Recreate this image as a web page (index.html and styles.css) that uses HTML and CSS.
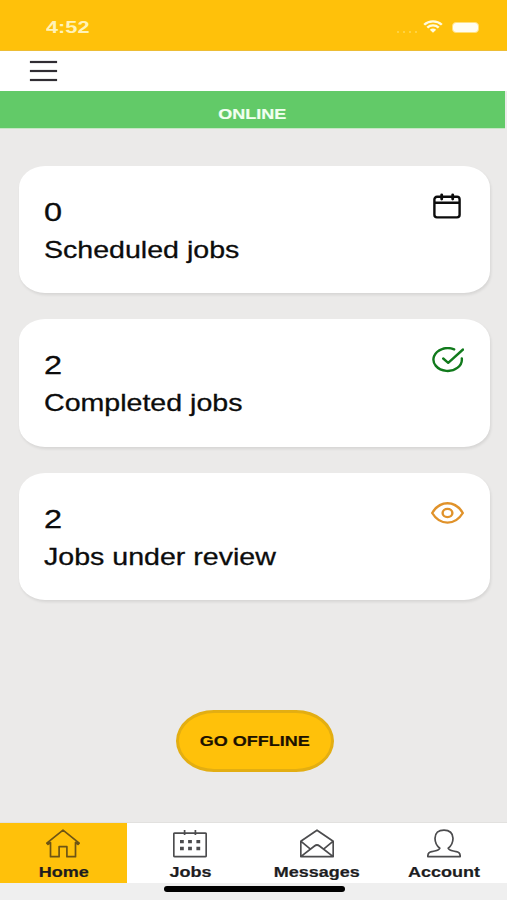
FILE: index.html
```html
<!DOCTYPE html>
<html lang="en">

<head>
    <meta charset="UTF-8">
    <meta name="viewport" content="width=device-width, initial-scale=1.0">
    <title>Jobs</title>
    <link rel="stylesheet" href="styles.css">
</head>

<body>
    <div class="status-bar">
        <span class="time">4:52</span>
        <div class="status-icons">
            <span class="dots"><i></i><i></i><i></i><i></i></span>
            <svg class="wifi" viewBox="0 0 20 14" preserveAspectRatio="none">
                <path d="M1.2 5.2a12.5 12.5 0 0 1 17.6 0M4.3 8.2a8.2 8.2 0 0 1 11.4 0" />
                <path class="fill" d="M6.8 10.6a4.6 4.6 0 0 1 6.4 0L10 13.8z" />
            </svg>
            <span class="battery"></span>
        </div>
    </div>

    <header>
        <button class="menu-btn" aria-label="Menu"><span></span><span></span><span></span></button>
    </header>

    <div class="banner"><span class="wide">ONLINE</span></div>

    <main>
        <div class="card">
            <div>
                <p class="count">0</p>
                <p class="label">Scheduled jobs</p>
            </div>
            <svg class="icon calendar" viewBox="0 0 28 26">
                <path d="M4 3.8h20a2.6 2.6 0 0 1 2.6 2.6v15.4a2.6 2.6 0 0 1-2.6 2.6H4a2.6 2.6 0 0 1-2.6-2.6V6.4A2.6 2.6 0 0 1 4 3.8zM1.4 9.8h25.2" />
                <path class="rings" d="M8.7 1.8v4.3M19.7 1.8v4.3" />
            </svg>
        </div>
        <div class="card">
            <div>
                <p class="count">2</p>
                <p class="label">Completed jobs</p>
            </div>
            <svg class="icon check" viewBox="0 0 32 26">
                <path d="M22.2 2.4A14.2 11.4 0 1 0 29.8 11.5M11.2 11.5l5 4.3L31 2.5" />
            </svg>
        </div>
        <div class="card">
            <div>
                <p class="count">2</p>
                <p class="label">Jobs under review</p>
            </div>
            <svg class="icon eye" viewBox="0 0 33 22">
                <path d="M1.2 11C5 4.5 10.5 1.2 16.5 1.2S28 4.5 31.8 11C28 17.3 22.5 20.6 16.5 20.6S5 17.3 1.2 11z" />
                <ellipse cx="16.5" cy="11" rx="4.9" ry="4.1" />
            </svg>
        </div>
        <button class="offline-btn"><span class="wide">GO OFFLINE</span></button>
    </main>

    <nav>
        <a href="#" class="active">
            <svg viewBox="0 0 34 30">
                <path d="M.8 14.2L17 1.2l16.2 13-1.2 1.1-2.5-1.8v14.2h-8.6v-10h-7.8v10H4.5V13.5L2 15.3z" />
            </svg>
            <span class="wide">Home</span>
        </a>
        <a href="#">
            <svg viewBox="0 0 34 30">
                <rect x=".8" y="4.1" width="32.4" height="23.6" rx="1" />
                <path d="M11.6 1v5M22.4 1v5" />
                <path class="days" d="M7 12.6h3.8M15.1 12.6h3.8M23.4 12.6h3.8M7 19.5h3.8M15.1 19.5h3.8M23.4 19.5h3.8" />
            </svg>
            <span class="wide">Jobs</span>
        </a>
        <a href="#">
            <svg viewBox="0 0 34 30">
                <path d="M.8 12.2L17 1.2l16.2 11v15.5H.8zM.8 12.2l9.900 8.1M33.2 12.2l-9.9 8.1M.8 27.7L14.5 17q2.5-2 5 0l13.700 10.7" />
            </svg>
            <span class="wide">Messages</span>
        </a>
        <a href="#">
            <svg viewBox="0 0 34 30">
                <path d="M17 1.1c-5.5 0-9 3-9 8.2 0 4.3 1.8 7.7 4.8 9.9-.8 2.2-3.3 2.3-7 3.2-3.7.8-5 1.4-5 5.3h32.4c0-3.9-1.3-4.5-5-5.3-3.7-.9-6.2-1-7-3.2 3-2.2 4.8-5.6 4.8-9.9 0-5.2-3.5-8.2-9-8.2z" />
            </svg>
            <span class="wide">Account</span>
        </a>
    </nav>

    <div class="home-area"><span class="home-bar"></span></div>
</body>

</html>
```
FILE: styles.css
```css
* {
    box-sizing: border-box;
}

body {
    margin: 0;
    height: 900px;
    display: flex;
    flex-direction: column;
    overflow: hidden;
    background-color: #ebeae9;
    color: #0c0c0c;
    font-family: "Liberation Sans", Arial, sans-serif;
}

button {
    border: none;
    padding: 0;
    background: none;
    font-family: inherit;
    color: inherit;
}

svg {
    display: block;
    fill: none;
    stroke: currentColor;
}

.wide {
    display: inline-block;
    transform: scaleX(1.2);
    -webkit-text-stroke: 0.2px;
}

.status-bar {
    height: 51px;
    padding: 4px 28px 0 46px;
    display: flex;
    justify-content: space-between;
    align-items: center;
    background-color: #ffc10a;
    border-bottom: 1px solid #edbd35;
}

.time {
    margin-top: 1px;
    color: #fff3b8;
    font-size: 17px;
    font-weight: bold;
    transform: scaleX(1.28);
    transform-origin: left;
}

.status-icons {
    display: flex;
    align-items: center;
}

.dots {
    display: flex;
    gap: 4px;
    margin: 9px 6px 0 0;
}

.dots i {
    width: 2px;
    height: 2px;
    border-radius: 50%;
    background-color: #ffd754;
}

.wifi {
    width: 20px;
    height: 13px;
    margin: -1px 9px 0 0;
    color: #fffbe0;
    stroke-width: 2.4;
}

.wifi .fill {
    fill: currentColor;
    stroke: none;
}

.battery {
    width: 27px;
    height: 11px;
    border: 1px solid #ffe07a;
    border-radius: 4px;
    background-color: #fffdf2;
}

header {
    height: 40px;
    padding: 10px 30px;
    background-color: #fff;
}

.menu-btn {
    width: 27px;
    height: 20px;
    display: flex;
    flex-direction: column;
    justify-content: space-between;
}

.menu-btn span {
    width: 27px;
    height: 2px;
    background-color: #302d33;
    box-shadow: 0 0 1px #302d33;
}

.banner {
    height: 38px;
    margin-right: 2px;
    padding-top: 8px;
    text-align: center;
    line-height: 30px;
    font-size: 15px;
    font-weight: bold;
    color: #f0fff0;
    background-color: #62ca68;
    border-bottom: 1px solid #c5e6c4;
}

main {
    flex: 1;
    padding: 36.5px 17px 0 19px;
    display: flex;
    flex-direction: column;
    align-items: center;
}

.card {
    width: 100%;
    height: 127.5px;
    margin-bottom: 26px;
    padding: 28px 25px;
    display: flex;
    justify-content: space-between;
    background-color: #fff;
    border-radius: 26px / 22px;
    box-shadow: 1px 2px 3px rgba(0, 0, 0, 0.09);
}

.card p {
    margin: 0;
    line-height: 37px;
    white-space: nowrap;
    transform-origin: left;
    -webkit-text-stroke: 0.3px;
}

.count {
    font-size: 26px;
    transform: scaleX(1.25);
}

.label {
    font-size: 24px;
    transform: scaleX(1.19);
}

.icon {
    flex-shrink: 0;
    stroke-width: 2.4;
    stroke-linecap: round;
    stroke-linejoin: round;
}

.calendar {
    width: 28px;
    height: 26px;
    margin: -1px 4px 0 0;
}

.calendar .rings {
    stroke-width: 2.8;
}

.check {
    width: 32px;
    height: 26px;
    margin: -0.5px 1px 0 0;
    color: #117a1c;
}

.eye {
    width: 33px;
    height: 22px;
    margin: 1.5px 1px 0 0;
    color: #e0922a;
}

.offline-btn {
    width: 158px;
    height: 62px;
    margin-top: 83.5px;
    border: 3px solid #e3ae12;
    border-radius: 38px / 31px;
    background-color: #ffc10a;
    color: #1c1200;
    font-size: 15px;
    font-weight: bold;
}

nav {
    height: 61px;
    display: flex;
    background-color: #fff;
    border-top: 1px solid #e2e1df;
}

nav a {
    flex: 1;
    padding-top: 6px;
    display: flex;
    flex-direction: column;
    align-items: center;
    color: #1d1d1f;
    font-size: 15px;
    font-weight: bold;
    line-height: 25px;
    text-decoration: none;
}

nav a.active {
    background-color: #ffc10a;
}

nav svg {
    width: 34px;
    height: 30px;
    flex-shrink: 0;
    color: #4c4c4e;
    stroke-width: 1.7;
    stroke-linejoin: round;
}

nav .active svg {
    color: #6d5415;
}

nav .days {
    stroke-width: 3.4;
}

.home-area {
    height: 17px;
    padding: 3px 0 0 1px;
    display: flex;
    justify-content: center;
    background-color: #efefef;
}

.home-bar {
    width: 181px;
    height: 6px;
    border-radius: 3px;
    background-color: #000;
}
```
